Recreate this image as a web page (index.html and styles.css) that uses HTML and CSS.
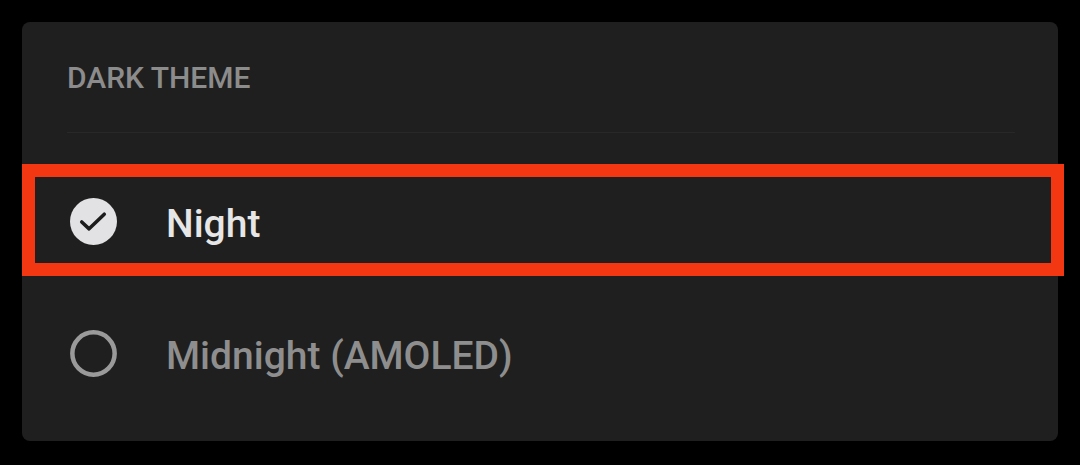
FILE: index.html
```html
<html lang="en">
  <head>
    <meta name="viewport" content="width=device-width,initial-scale=1">
    <title>Dark theme</title>
    <link rel="stylesheet" href="styles.css">
  </head>
<body>
  <div class="card">
    <div class="header">DARK THEME</div>
    <div class="divider"></div>
    <div class="options">
      <div class="option selected highlight">
        <svg class="icon" width="47" height="47" viewBox="0 0 48 48">
          <circle cx="24" cy="24" r="24" fill="#e2e2e4"/>
          <path d="M12 24.5 L19.5 31.5 L35 16.5" fill="none" stroke="#1c1c1c" stroke-width="3.6" stroke-linecap="round" stroke-linejoin="round"/>
        </svg>
        <div class="label">Night</div>
      </div>
      <div class="option">
        <svg class="icon" width="47" height="47" viewBox="0 0 48 48">
          <circle cx="24" cy="24" r="21.6" fill="none" stroke="#9a9a9a" stroke-width="4.6"/>
        </svg>
        <div class="label">Midnight (AMOLED)</div>
      </div>
    </div>
  </div>
</body>
</html>
```

FILE: styles.css
```css
html, body {
  padding: 0;
  margin: 0;
  background: #000;
  font-family: Roboto, "Liberation Sans", sans-serif;
}
.card {
  margin: 22px 22px 0 22px;
  height: 419px;
  box-sizing: border-box;
  background: #1f1f1f;
  border-radius: 8px;
  padding-top: 38px;
}
.header {
  padding-left: 45px;
  font-size: 30px;
  line-height: 36px;
  font-weight: 500;
  color: #8c8c8c;
  padding-bottom: 36px;
}
.divider {
  height: 1px;
  margin: 0 43px 0 45px;
  background: #282828;
}
.options {
  padding-top: 22px;
}
.option {
  position: relative;
  height: 132px;
  display: flex;
  align-items: center;
  padding-left: 48px;
}
.icon {
  flex: none;
  display: block;
}
.label {
  margin-left: 49px;
  margin-top: 5px;
  font-size: 39px;
  line-height: 44px;
  font-weight: 500;
  color: #8e8e8e;
}
.selected .label {
  color: #e6e6e6;
}
.highlight::after {
  content: "";
  position: absolute;
  top: 9px;
  bottom: 11px;
  left: 0;
  right: -6px;
  border: 13px solid #f23712;
}
```
